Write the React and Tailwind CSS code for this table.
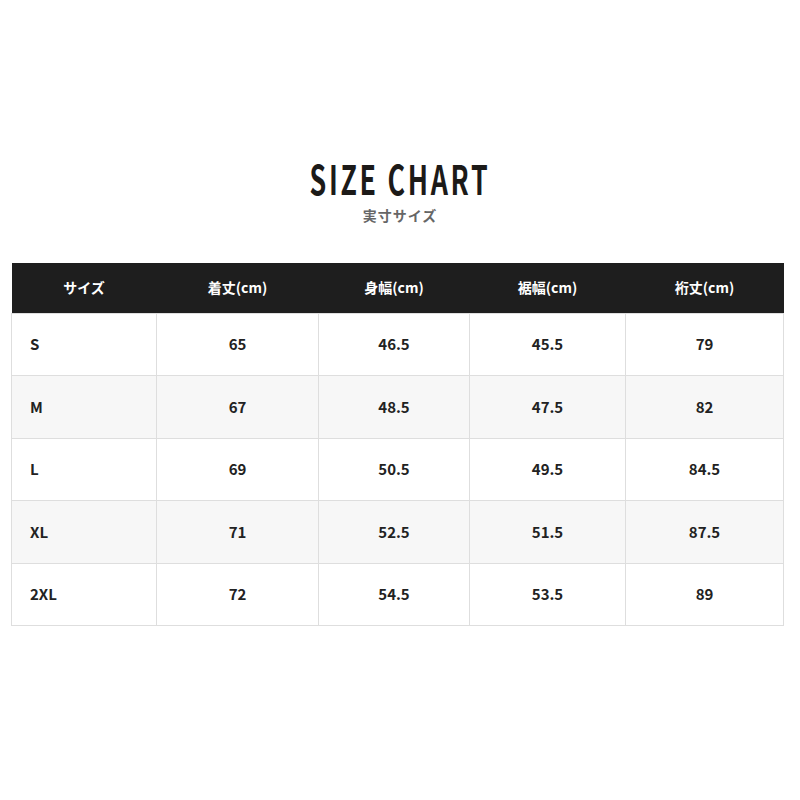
const rows = [
  ['S', '65', '46.5', '45.5', '79'],
  ['M', '67', '48.5', '47.5', '82'],
  ['L', '69', '50.5', '49.5', '84.5'],
  ['XL', '71', '52.5', '51.5', '87.5'],
  ['2XL', '72', '54.5', '53.5', '89'],
];

const headers = ['サイズ', '着丈(cm)', '身幅(cm)', '裾幅(cm)', '裄丈(cm)'];
const widths = ['w-[145px]', 'w-[162px]', 'w-[151px]', 'w-[156px]', 'w-[158px]'];

export default function App() {
  return (
    <div className="w-[800px] h-[800px] bg-white pt-[160px] font-['Noto_Sans_CJK_JP','Noto_Sans',sans-serif]">
      {/* Title */}
      <div className="text-center">
        <h1 className="inline-block scale-x-[0.67] origin-center text-[40px] leading-[36px] font-bold tracking-[4px] text-[#1c1a18]">
          SIZE CHART
        </h1>
        <p className="mt-[5px] text-[14px] font-bold text-[#666] tracking-[1px]">実寸サイズ</p>
      </div>

      {/* Table */}
      <div className="px-[11px] mt-[37px]">
        <table className="w-[772px] table-fixed border-collapse text-[15px] font-bold text-[#222]">
          <thead>
            <tr className="bg-[#1e1e1e] text-white h-[50px]">
              {headers.map((h, i) => (
                <th key={h} className={`${widths[i]} text-[14px] font-bold text-center`}>
                  {h}
                </th>
              ))}
            </tr>
          </thead>
          <tbody>
            {rows.map((r, ri) => (
              <tr key={r[0]} className={`h-[62.6px] ${ri % 2 === 1 ? 'bg-[#f7f7f7]' : 'bg-white'}`}>
                {r.map((c, ci) => (
                  <td
                    key={ci}
                    className={`border border-[#dedede] ${ci === 0 ? 'text-left pl-[18px]' : 'text-center'}`}
                  >
                    {c}
                  </td>
                ))}
              </tr>
            ))}
          </tbody>
        </table>
      </div>
    </div>
  );
}
